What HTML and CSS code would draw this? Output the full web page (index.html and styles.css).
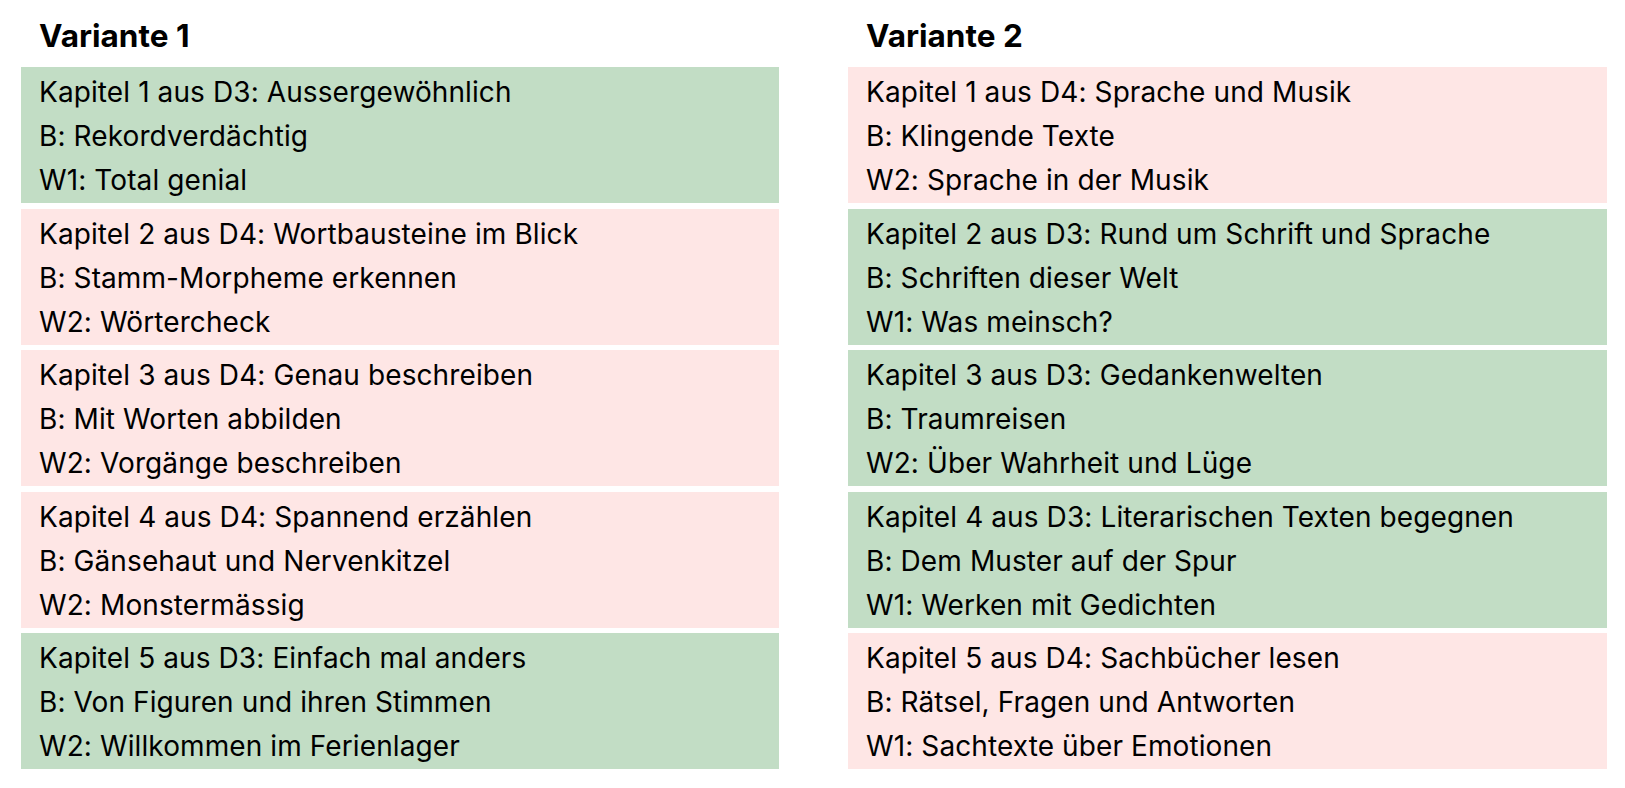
FILE: index.html
```html
<!DOCTYPE html>
<html lang="de">
<head>
<meta charset="utf-8">
<title>Varianten</title>
<link rel="stylesheet" href="styles.css">
</head>
<body>
<main class="page">
  <section class="variant">
    <h2 class="variant-title">Variante 1</h2>
    <div class="chapter green">
      <p>Kapitel 1 aus D3: Aussergewöhnlich</p>
      <p>B: Rekordverdächtig</p>
      <p>W1: Total genial</p>
    </div>
    <div class="chapter pink">
      <p>Kapitel 2 aus D4: Wortbausteine im Blick</p>
      <p>B: Stamm-Morpheme erkennen</p>
      <p>W2: Wörtercheck</p>
    </div>
    <div class="chapter pink">
      <p>Kapitel 3 aus D4: Genau beschreiben</p>
      <p>B: Mit Worten abbilden</p>
      <p>W2: Vorgänge beschreiben</p>
    </div>
    <div class="chapter pink">
      <p>Kapitel 4 aus D4: Spannend erzählen</p>
      <p>B: Gänsehaut und Nervenkitzel</p>
      <p>W2: Monstermässig</p>
    </div>
    <div class="chapter green">
      <p>Kapitel 5 aus D3: Einfach mal anders</p>
      <p>B: Von Figuren und ihren Stimmen</p>
      <p>W2: Willkommen im Ferienlager</p>
    </div>
  </section>
  <section class="variant">
    <h2 class="variant-title">Variante 2</h2>
    <div class="chapter pink">
      <p>Kapitel 1 aus D4: Sprache und Musik</p>
      <p>B: Klingende Texte</p>
      <p>W2: Sprache in der Musik</p>
    </div>
    <div class="chapter green">
      <p>Kapitel 2 aus D3: Rund um Schrift und Sprache</p>
      <p>B: Schriften dieser Welt</p>
      <p>W1: Was meinsch?</p>
    </div>
    <div class="chapter green">
      <p>Kapitel 3 aus D3: Gedankenwelten</p>
      <p>B: Traumreisen</p>
      <p>W2: Über Wahrheit und Lüge</p>
    </div>
    <div class="chapter green">
      <p>Kapitel 4 aus D3: Literarischen Texten begegnen</p>
      <p>B: Dem Muster auf der Spur</p>
      <p>W1: Werken mit Gedichten</p>
    </div>
    <div class="chapter pink">
      <p>Kapitel 5 aus D4: Sachbücher lesen</p>
      <p>B: Rätsel, Fragen und Antworten</p>
      <p>W1: Sachtexte über Emotionen</p>
    </div>
  </section>
</main>
</body>
</html>
```
FILE: styles.css
```css
html, body {
  margin: 0;
  padding: 0;
  background: #ffffff;
}
body {
  font-family: Inter, "Noto Sans", sans-serif;
  color: #000000;
}
.page {
  display: grid;
  grid-template-columns: 758px 759px;
  column-gap: 69px;
  padding: 0 0 0 21px;
}
.variant {
  display: flex;
  flex-direction: column;
  gap: 5.5px;
}
.variant-title {
  margin: 0;
  height: 61.5px;
  box-sizing: border-box;
  padding: 18px 0 0 18px;
  font-size: 31.5px;
  line-height: 36px;
  font-weight: 700;
}
.chapter {
  height: 136px;
  box-sizing: border-box;
  padding: 3px 0 0 18px;
}
.chapter p {
  margin: 0;
  font-size: 28px;
  line-height: 44px;
  letter-spacing: 0.1px;
}
.green { background: #c2ddc5; }
.pink { background: #fee6e5; }
```
